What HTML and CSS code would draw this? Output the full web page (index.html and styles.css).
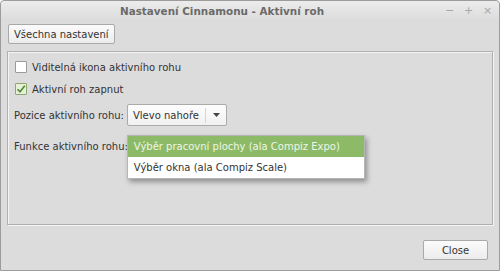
FILE: index.html
```html
<!DOCTYPE html>
<html lang="cs">
  <head>
    <meta charset="UTF-8" />
    <title>Nastavení Cinnamonu - Aktivní roh</title>
    <link rel="stylesheet" href="styles.css">
  </head>
  <body>
    <div class="window">
      <div class="titlebar">
        <div class="title">Nastavení Cinnamonu - Aktivní roh</div>
        <div class="controls">
          <span class="ctl">&minus;</span>
          <span class="ctl">+</span>
          <span class="ctl">&times;</span>
        </div>
      </div>
      <div class="content">
        <div class="top-row">
          <button class="btn">Všechna nastavení</button>
        </div>
        <div class="frame">
          <label class="check">
            <span class="box"></span>
            <span>Viditelná ikona aktivního rohu</span>
          </label>
          <label class="check">
            <span class="box checked">
              <svg width="10" height="10" viewBox="0 0 10 10"><path d="M1.5 5.2 L4 7.8 L8.8 1.8" fill="none" stroke="#4f8a2e" stroke-width="1.6"/></svg>
            </span>
            <span>Aktivní roh zapnut</span>
          </label>
          <div class="field">
            <span>Pozice aktivního rohu:</span>
            <div class="combo">
              <span class="combo-text">Vlevo nahoře</span>
              <span class="combo-arrow">
                <svg width="7" height="4" viewBox="0 0 7 4"><path d="M0 0 H7 L3.5 4 Z" fill="#444"/></svg>
              </span>
            </div>
          </div>
          <div class="field">
            <span>Funkce aktivního rohu:</span>
            <div class="menu-anchor">
              <div class="menu">
                <div class="item active">Výběr pracovní plochy (ala Compiz Expo)</div>
                <div class="item">Výběr okna (ala Compiz Scale)</div>
              </div>
            </div>
          </div>
        </div>
        <div class="bottom-row">
          <button class="btn close">Close</button>
        </div>
      </div>
    </div>
  </body>
</html>
```

FILE: styles.css
```css
body {
  margin: 0;
  width: 500px;
  height: 272px;
  background: #ffffff;
  font-family: "DejaVu Sans", sans-serif;
  font-size: 10px;
  color: #333;
}

.window {
  box-sizing: border-box;
  width: 500px;
  height: 271px;
  border: 1px solid #9c9c9c;
  border-radius: 4px 4px 0 0;
  background: #dcdcdc;
  display: flex;
  flex-direction: column;
}

.titlebar {
  height: 19px;
  display: flex;
  align-items: center;
  justify-content: center;
  position: relative;
  background: linear-gradient(#ececec, #dcdcdc);
  border-radius: 4px 4px 0 0;
}
.title {
  font-weight: bold;
  color: #6a6a6a;
  font-size: 10.4px;
  padding-right: 56px;
}
.controls {
  position: absolute;
  right: 6px;
  top: 3px;
  display: flex;
  gap: 8px;
  color: #a8a8a8;
  font-size: 11px;
}
.ctl {
  width: 11px;
  text-align: center;
}

.content {
  flex: 1;
  display: flex;
  flex-direction: column;
  padding: 4px 6px 0 6px;
}

.btn {
  font-family: inherit;
  font-size: 10px;
  color: #333;
  background: linear-gradient(#fbfbfb, #ececec);
  border: 1px solid #a9a9a9;
  border-radius: 2px;
  padding: 0 5px;
  height: 20px;
  margin-left: 1px;
}

.frame {
  margin-top: 7px;
  height: 174px;
  box-sizing: border-box;
  border: 1px solid #b0b0b0;
  box-shadow: inset 1px 1px 0 #f4f4f4, 1px 1px 0 #f4f4f4;
  padding: 8px 6px;
  display: flex;
  flex-direction: column;
}

.check {
  display: flex;
  align-items: center;
  gap: 5px;
  height: 14px;
  margin-bottom: 8px;
  padding-left: 1px;
}
.box {
  width: 10px;
  height: 10px;
  border: 1px solid #9a9a9a;
  background: #fff;
  border-radius: 1px;
  display: flex;
}
.box.checked {
  background: #e8f0dc;
  border-color: #8aa86e;
}

.field {
  display: flex;
  align-items: center;
  gap: 3px;
  height: 22px;
  margin-bottom: 9px;
}
.combo {
  width: 100px;
  height: 22px;
  box-sizing: border-box;
  border: 1px solid #aaa;
  border-radius: 2px;
  background: linear-gradient(#fdfdfd, #f1f1f1);
  display: flex;
  align-items: center;
}
.combo-text {
  flex: 1;
  padding-left: 5px;
}
.combo-arrow {
  width: 20px;
  height: 15px;
  border-left: 1px solid #d6d6d6;
  display: flex;
  align-items: center;
  justify-content: center;
}

.menu-anchor {
  position: relative;
  width: 0;
  height: 0;
}
.menu {
  position: absolute;
  left: -4px;
  top: -11px;
  width: 236px;
  background: #ffffff;
  border: 1px solid #b5b5b5;
  box-shadow: 2px 3px 5px rgba(0, 0, 0, 0.35);
}
.item {
  height: 21px;
  line-height: 21px;
  padding-left: 6px;
  white-space: nowrap;
}
.item.active {
  background: #8dba67;
  color: #eef6e6;
}

.bottom-row {
  display: flex;
  justify-content: flex-end;
  padding: 15px 5px 0 0;
}
.btn.close {
  width: 65px;
}
```
